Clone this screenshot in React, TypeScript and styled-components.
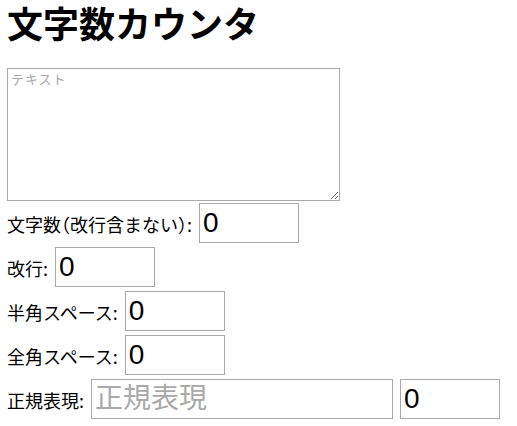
import React, { useState } from "react";
import styled, { createGlobalStyle } from "styled-components";

const GlobalStyle = createGlobalStyle`
  html, body { margin: 0; padding: 0; background: #fff; }
  body { font-family: "Noto Sans CJK JP", "Noto Sans", sans-serif; color: #000; }
`;

const Page = styled.div`
  padding: 0 7px;
`;

const Title = styled.h1`
  margin: 0 0 24px;
  font-size: 36px;
  line-height: 44px;
  font-weight: 700;
  font-family: "Noto Sans CJK JP", sans-serif;
`;

const TextArea = styled.textarea`
  display: block;
  box-sizing: border-box;
  width: 333px;
  height: 133px;
  margin: 0 0 2px;
  padding: 2px 3px;
  border: 1px solid #a9a9a9;
  font-family: "Noto Sans CJK JP", monospace;
  font-size: 13px;
  line-height: 15px;
  letter-spacing: 1px;
  outline: none;
  &::placeholder { color: #a9a9a9; }
`;

const Rows = styled.div`
  display: flex;
  flex-direction: column;
  gap: 4px;
`;

const Row = styled.div`
  display: flex;
  align-items: baseline;
`;

const Label = styled.span`
  font-size: 18px;
  font-family: "Noto Sans CJK JP", sans-serif;
  font-feature-settings: "halt";
  margin-right: 7px;
`;

const Field = styled.input<{ $w?: number }>`
  box-sizing: border-box;
  width: ${(p) => p.$w ?? 100}px;
  height: 40px;
  margin: 0;
  padding: 1px 3px;
  border: 1px solid #a9a9a9;
  font-family: "Liberation Sans", "Noto Sans CJK JP", sans-serif;
  font-size: 28px;
  color: #000;
  outline: none;
  & + & { margin-left: 7px; }
  &::placeholder { color: #a9a9a9; font-family: "Noto Sans CJK JP", sans-serif; }
`;

export default function App() {
  const [text, setText] = useState("");
  const [re, setRe] = useState("");
  const chars = text.replace(/\n/g, "").length;
  const lines = (text.match(/\n/g) || []).length;
  const half = (text.match(/ /g) || []).length;
  const full = (text.match(/\u3000/g) || []).length;
  let reCount = 0;
  try {
    if (re) reCount = (text.match(new RegExp(re, "g")) || []).length;
  } catch {
    reCount = 0;
  }
  return (
    <Page>
      <GlobalStyle />
      <Title>文字数カウンタ</Title>
      <TextArea placeholder="テキスト" value={text} onChange={(e) => setText(e.target.value)} />
      <Rows>
        <Row>
          <Label>文字数（改行含まない）:</Label>
          <Field readOnly value={chars} />
        </Row>
        <Row>
          <Label>改行:</Label>
          <Field readOnly value={lines} />
        </Row>
        <Row>
          <Label>半角スペース:</Label>
          <Field readOnly value={half} />
        </Row>
        <Row>
          <Label>全角スペース:</Label>
          <Field readOnly value={full} />
        </Row>
        <Row>
          <Label>正規表現:</Label>
          <Field $w={302} placeholder="正規表現" value={re} onChange={(e) => setRe(e.target.value)} />
          <Field readOnly value={reCount} />
        </Row>
      </Rows>
    </Page>
  );
}
